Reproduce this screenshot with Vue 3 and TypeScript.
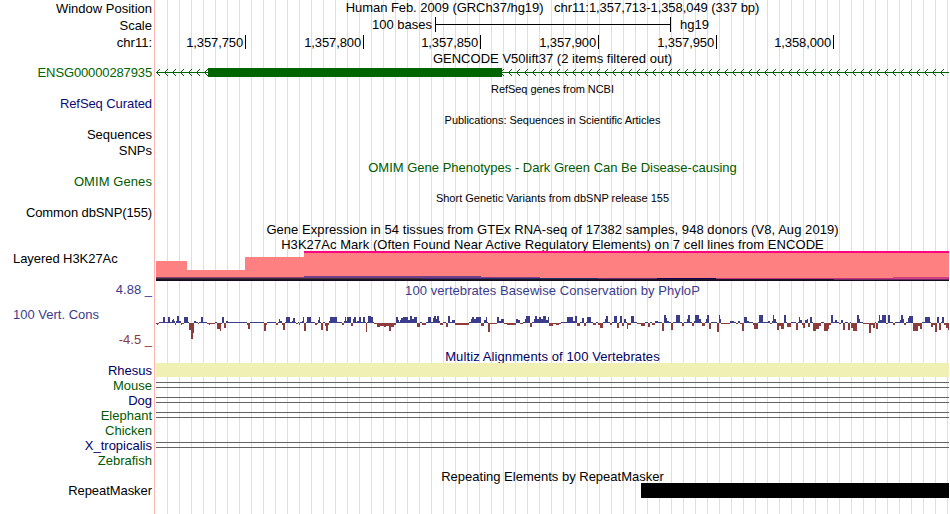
<template>
  <div class="browser">
    <div class="labels">
      <div
        v-for="label in labels"
        :key="label.text"
        class="label"
        :class="[label.tone, { indented: label.indented }]"
        :style="{ marginTop: label.gap + 'px', letterSpacing: (label.spacing ?? 0) + 'px' }"
      >
        {{ label.text }}
      </div>
    </div>
    <div class="tracks">
      <h1 class="title position">Human Feb. 2009 (GRCh37/hg19) &nbsp; chr11:1,357,713-1,358,049 (337 bp)</h1>

      <div class="scale">
        <span class="scale-text">100 bases</span>
        <span class="scale-bar"></span>
        <span class="scale-assembly">hg19</span>
      </div>

      <div class="ruler">
        <span v-for="tick in ticks" :key="tick.text" class="tick" :style="{ width: tick.width + 'px' }">
          {{ tick.text }}
        </span>
      </div>

      <h2 class="title gencode">GENCODE V50lift37 (2 items filtered out)</h2>
      <svg class="gene" width="793" height="15" shape-rendering="crispEdges">
        <rect x="0" y="6" width="793" height="1" fill="#006400" />
        <path :d="chevrons" fill="#006400" />
        <rect x="52" y="2" width="294" height="9" fill="#006400" />
      </svg>

      <h2 class="title small refseq">RefSeq genes from NCBI</h2>
      <h2 class="title small publications">Publications: Sequences in Scientific Articles</h2>
      <h2 class="title green omim">OMIM Gene Phenotypes - Dark Green Can Be Disease-causing</h2>
      <h2 class="title small dbsnp">Short Genetic Variants from dbSNP release 155</h2>
      <h2 class="title gtex">Gene Expression in 54 tissues from GTEx RNA-seq of 17382 samples, 948 donors (V8, Aug 2019)</h2>
      <h2 class="title h3k27ac">H3K27Ac Mark (Often Found Near Active Regulatory Elements) on 7 cell lines from ENCODE</h2>

      <svg class="layered" width="793" height="30" shape-rendering="crispEdges">
        <rect
          v-for="(layer, index) in layers"
          :key="index"
          :x="layer.x"
          :y="layer.y"
          :width="layer.width"
          :height="layer.height"
          :fill="layer.color"
        />
      </svg>

      <h2 class="title blue phylop">100 vertebrates Basewise Conservation by PhyloP</h2>
      <svg class="wiggle" width="793" height="51" shape-rendering="crispEdges">
        <rect
          v-for="bar in bars"
          :key="bar.x"
          :x="bar.x"
          :y="bar.y"
          :width="bar.width"
          :height="bar.height"
          :fill="bar.color"
        />
      </svg>

      <h2 class="title navy multiz">Multiz Alignments of 100 Vertebrates</h2>
      <div v-for="row in species" :key="row.name" class="species">
        <div :class="row.kind"></div>
      </div>

      <h2 class="title repeats">Repeating Elements by RepeatMasker</h2>
      <div class="repeat-track">
        <div class="repeat-item"></div>
      </div>
    </div>
  </div>
</template>

<script setup lang="ts">
interface Label {
  text: string
  gap: number
  tone: string
  indented?: boolean
  spacing?: number
}

interface Rect {
  x: number
  y: number
  width: number
  height: number
  color: string
}

const TRACK_LEFT = 156
const TRACK_RIGHT = 949

const labels: Label[] = [
  { text: 'Window Position', gap: 1, tone: 'black' },
  { text: 'Scale', gap: 2, tone: 'black' },
  { text: 'chr11:', gap: 2, tone: 'black' },
  { text: 'ENSG00000287935', gap: 15, tone: 'gene-green', spacing: -0.13 },
  { text: 'RefSeq Curated', gap: 16, tone: 'refseq-blue', spacing: -0.08 },
  { text: 'Sequences', gap: 16, tone: 'black' },
  { text: 'SNPs', gap: 1, tone: 'black' },
  { text: 'OMIM Genes', gap: 16, tone: 'green', spacing: 0.08 },
  { text: 'Common dbSNP(155)', gap: 16, tone: 'black', spacing: -0.11 },
  { text: 'Layered H3K27Ac', gap: 31, tone: 'black', indented: true, spacing: -0.06 },
  { text: '4.88 _', gap: 16, tone: 'blue' },
  { text: '100 Vert. Cons', gap: 10, tone: 'blue', indented: true },
  { text: '-4.5 _', gap: 10, tone: 'red' },
  { text: 'Rhesus', gap: 16, tone: 'navy' },
  { text: 'Mouse', gap: 0, tone: 'green' },
  { text: 'Dog', gap: 0, tone: 'navy' },
  { text: 'Elephant', gap: 0, tone: 'green' },
  { text: 'Chicken', gap: 0, tone: 'green' },
  { text: 'X_tropicalis', gap: 0, tone: 'navy' },
  { text: 'Zebrafish', gap: 0, tone: 'green' },
  { text: 'RepeatMasker', gap: 15, tone: 'black', spacing: -0.06 }
]

const ticks = [
  { text: '1,357,750', width: 90 },
  { text: '1,357,800', width: 118 },
  { text: '1,357,850', width: 117 },
  { text: '1,357,900', width: 118 },
  { text: '1,357,950', width: 118 },
  { text: '1,358,000', width: 117 }
]

const species = [
  { name: 'Rhesus', kind: 'aligned' },
  { name: 'Mouse', kind: 'bridged' },
  { name: 'Dog', kind: 'bridged' },
  { name: 'Elephant', kind: 'bridged' },
  { name: 'Chicken', kind: 'missing' },
  { name: 'X_tropicalis', kind: 'bridged' },
  { name: 'Zebrafish', kind: 'missing' }
]

// strand direction arrows, one every 8px
const chevrons = Array.from({ length: 99 }, (_, i) => {
  const x = 1 + i * 8
  return [1, 2, 3]
    .map((n) => `M${x + n - 1} ${6 - n}h1v1h-1zM${x + n - 1} ${6 + n}h1v1h-1z`)
    .join('')
}).join('')

// overlaid cell lines, bottom of the track is y = 30
const layers: Rect[] = [
  { x: 0, y: 10, width: 31, height: 20, color: '#ff8080' },
  { x: 31, y: 19, width: 58, height: 11, color: '#ff8080' },
  { x: 89, y: 6, width: 59, height: 24, color: '#ff8080' },
  { x: 148, y: 0, width: 645, height: 30, color: '#ff8080' },
  { x: 148, y: 0, width: 645, height: 2, color: '#ff0080' },
  { x: 0, y: 26, width: 148, height: 1, color: '#8a4070' },
  { x: 0, y: 27, width: 325, height: 2, color: '#40303c' },
  { x: 148, y: 25, width: 177, height: 2, color: '#6f4088' },
  { x: 266, y: 27, width: 59, height: 1, color: '#403070' },
  { x: 325, y: 26, width: 59, height: 1, color: '#8a4088' },
  { x: 325, y: 27, width: 117, height: 2, color: '#203068' },
  { x: 442, y: 27, width: 59, height: 1, color: '#703070' },
  { x: 501, y: 27, width: 59, height: 2, color: '#180050' },
  { x: 560, y: 27, width: 233, height: 1, color: '#c03878' },
  { x: 678, y: 28, width: 115, height: 1, color: '#702868' },
  { x: 737, y: 26, width: 56, height: 2, color: '#d04080' },
  { x: 0, y: 29, width: 793, height: 1, color: '#140c20' },
  { x: 0, y: 28, width: 678, height: 1, color: '#201428' }
]

// conservation score: [start x, height], negative values hang below the axis
const scores: [number, number][] = [
  [156, -1], [157, -2], [158, -1], [159, 1], [163, 6], [165, 1], [168, 6], [170, 1], [172, 3], [173, 4],
  [174, 2], [175, -2], [176, 2], [177, 7], [179, 2], [181, -2], [182, -1], [184, 6], [188, 1], [189, -7],
  [191, -16], [193, -10], [194, 2], [196, 1], [198, -1], [199, 1], [201, 6], [203, 1], [207, -1], [209, -2],
  [210, -1], [215, 1], [217, -6], [220, -8], [221, -1], [222, 6], [224, -5], [226, 2], [228, 1], [247, -2],
  [248, -6], [250, 1], [264, -8], [266, -2], [267, 1], [276, -2], [278, 1], [279, 4], [280, 2], [282, -2],
  [283, -7], [285, 1], [286, 6], [290, 1], [292, 2], [293, 5], [295, 1], [296, -1], [298, 1], [299, -2],
  [300, 1], [302, 2], [303, 6], [304, -8], [306, 1], [307, 6], [311, 1], [315, -2], [317, -1], [318, 3],
  [319, 6], [320, 1], [321, -7], [323, 1], [325, -3], [326, -8], [328, -2], [329, 2], [330, 6], [337, 1],
  [342, -2], [344, 2], [345, 6], [346, 2], [347, 6], [351, -3], [353, 4], [354, 6], [356, 1], [357, 2],
  [359, 6], [361, 1], [363, 6], [365, 1], [366, -9], [367, 1], [368, 7], [371, 6], [373, 1], [374, -1],
  [377, -4], [380, -3], [384, -4], [386, -3], [389, -8], [391, -4], [394, -2], [396, 6], [398, 3], [399, 1],
  [400, 3], [401, 5], [403, 6], [408, 3], [410, 7], [412, 4], [414, 6], [417, -4], [420, 1], [422, -2],
  [426, 1], [428, 6], [431, 1], [433, 5], [434, 7], [436, 4], [437, 7], [439, 2], [440, -2], [443, 1],
  [446, -4], [448, 7], [450, 1], [452, 3], [455, -2], [469, 1], [471, 4], [472, 6], [474, 4], [476, 6],
  [481, -3], [484, 3], [486, 6], [487, 1], [488, -9], [490, -1], [497, 6], [499, 2], [501, 4], [504, -1],
  [507, -2], [516, 4], [518, 3], [520, -1], [523, 1], [525, 4], [526, 7], [530, -4], [532, 1], [534, 4],
  [535, 7], [537, 4], [539, 6], [541, 4], [543, 7], [546, 3], [548, 6], [549, -3], [553, -1], [556, -2],
  [559, -1], [561, 1], [567, 6], [573, 2], [575, 7], [577, -3], [580, 1], [582, 5], [584, -3], [586, 1],
  [587, 6], [591, 1], [593, -2], [596, 1], [598, -2], [600, -5], [603, 1], [605, 4], [606, 7], [608, 1],
  [610, -2], [612, 1], [614, 7], [617, -5], [619, 1], [620, 7], [622, -3], [624, 4], [626, 1], [627, -6],
  [628, -2], [631, 7], [634, 1], [637, -1], [641, -3], [645, 1], [648, -4], [650, 1], [652, -2], [655, 2],
  [658, 1], [662, -8], [664, 8], [666, 5], [667, 2], [669, 1], [671, -7], [673, 1], [676, 8], [680, 1],
  [682, -3], [684, 1], [687, 4], [688, 8], [690, 1], [692, -3], [694, 2], [695, 8], [699, 4], [701, 1],
  [702, -3], [705, 1], [706, 4], [707, 8], [709, -6], [711, 1], [717, -9], [719, 8], [720, 4], [721, -1],
  [730, 2], [734, 1], [736, -1], [738, 2], [740, -1], [742, -8], [744, 6], [747, 2], [749, 1], [753, -2],
  [754, -6], [758, 1], [759, 8], [763, 1], [768, 2], [770, -1], [772, 2], [773, 8], [774, 4], [776, 1],
  [777, -7], [779, -3], [781, -6], [784, 8], [786, 1], [787, -4], [791, 1], [796, -7], [798, 1], [799, 6],
  [800, 3], [802, -2], [803, -5], [805, 3], [807, 4], [808, -4], [810, 6], [812, 1], [813, -8], [816, -6],
  [819, -3], [821, 1], [824, -8], [828, -6], [829, -2], [831, 8], [833, 1], [835, 3], [837, 1], [839, -1],
  [841, 3], [843, -7], [845, 1], [848, -7], [850, 1], [851, -5], [853, -8], [857, 8], [859, 4], [860, 1],
  [863, -1], [869, -10], [871, -2], [873, -5], [875, 1], [876, -6], [878, 2], [879, 8], [880, 3], [882, 8],
  [886, -1], [888, 8], [890, 1], [893, -2], [895, 1], [900, 3], [901, 8], [903, 4], [904, -2], [906, 1],
  [908, 5], [909, 7], [913, -8], [918, -3], [920, -6], [922, 1], [925, 6], [930, 1], [931, -4], [933, -2],
  [935, -9], [937, 6], [939, -7], [941, 1], [942, 6], [944, -2], [946, -5], [948, -7]
]

const AXIS = 25

const bars: Rect[] = scores.map(([start, score], i) => {
  const end = i + 1 < scores.length ? scores[i + 1][0] : TRACK_RIGHT
  return {
    x: start - TRACK_LEFT,
    y: score > 0 ? AXIS - score : AXIS,
    width: end - start,
    height: Math.abs(score),
    color: score > 0 ? '#3c3c8c' : '#8c3c3c'
  }
})
</script>

<style scoped>
.browser {
  display: flex;
  width: 949px;
  height: 514px;
  overflow: hidden;
  background: #fff;
  font-family: 'Liberation Sans', Arial, Helvetica, sans-serif;
  font-size: 13px;
  line-height: 15px;
  color: #000;
}

.labels {
  display: flex;
  flex-direction: column;
  box-sizing: border-box;
  width: 155px;
  padding-right: 2px;
  border-right: 1px solid #ffb4b4;
}

.label {
  height: 15px;
  text-align: right;
  white-space: pre;
}

.label.indented {
  padding-left: 13px;
  text-align: left;
}

.tracks {
  display: flex;
  flex-direction: column;
  box-sizing: border-box;
  width: 794px;
  padding-left: 1px;
  background: repeating-linear-gradient(to right, #dcdcf5 0 1px, transparent 1px 12px);
  background-clip: content-box;
}

.title {
  height: 15px;
  margin: 0;
  font-size: 13px;
  font-weight: normal;
  text-align: center;
  white-space: nowrap;
}

.title.small {
  height: 13px;
  font-size: 11px;
  line-height: 13px;
}

.position {
  letter-spacing: -0.06px;
}

.scale {
  display: flex;
  height: 18px;
  padding-top: 2px;
  box-sizing: border-box;
}

.scale-text {
  width: 276px;
  text-align: right;
}

.scale-bar {
  width: 234px;
  height: 15px;
  margin: 0 9px 0 3px;
  border: solid #000;
  border-width: 0 1px;
  background: linear-gradient(#000, #000) 0 7px / 100% 1px no-repeat;
}

.ruler {
  display: flex;
  height: 18px;
  padding-top: 2px;
  box-sizing: border-box;
}

.tick {
  box-sizing: border-box;
  height: 14px;
  padding-right: 2px;
  border-right: 1px solid #000;
  text-align: right;
  letter-spacing: -0.12px;
}

svg {
  display: block;
  flex: none;
}

.gencode {
  letter-spacing: 0.02px;
}

.refseq {
  margin-top: 2px;
  letter-spacing: -0.06px;
}

.publications {
  margin-top: 18px;
  letter-spacing: -0.04px;
}

.omim {
  margin-top: 33px;
}

.dbsnp {
  margin-top: 17px;
}

.gtex {
  margin-top: 17px;
  letter-spacing: 0.055px;
}

.h3k27ac {
  height: 14px;
  letter-spacing: 0.06px;
}

.phylop {
  margin-top: 2px;
  letter-spacing: 0.06px;
}

.multiz {
  height: 14px;
  letter-spacing: 0.1px;
}

.species {
  display: flow-root;
  height: 15px;
}

.aligned {
  height: 14px;
  background: #f0f0b4;
}

.bridged {
  height: 4px;
  margin-top: 4px;
  border: solid #646464;
  border-width: 1px 0;
}

.repeats {
  height: 14px;
  margin-top: 1px;
}

.repeat-track {
  height: 15px;
}

.repeat-item {
  height: 15px;
  margin-left: 485px;
  background: #000;
}

.black {
  color: #000;
}

.gene-green {
  color: #006400;
}

.refseq-blue {
  color: #0c0c78;
}

.green {
  color: #005a00;
}

.navy {
  color: #000064;
}

.blue {
  color: #3c3c8c;
}

.red {
  color: #8c3c3c;
}
</style>
